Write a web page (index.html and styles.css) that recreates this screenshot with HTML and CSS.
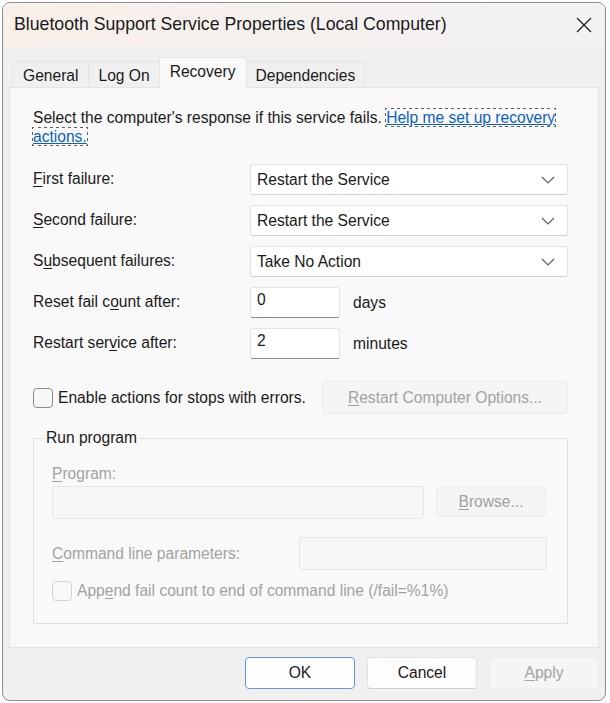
FILE: index.html
```html
<!DOCTYPE html>
<html lang="en">
  <head>
    <meta charset="UTF-8" />
    <title>Bluetooth Support Service Properties (Local Computer)</title>
    <link rel="stylesheet" href="styles.css">
  </head>
  <body>
    <div class="window">
      <div class="titlebar">
        <span class="title">Bluetooth Support Service Properties (Local Computer)</span>
        <button class="close-btn" aria-label="Close">
          <svg width="16" height="16" viewBox="0 0 16 16">
            <path d="M1 1 L15 15 M15 1 L1 15" stroke="#1b1b1b" stroke-width="1.2" fill="none" />
          </svg>
        </button>
      </div>

      <div class="tabs">
        <span class="tab">General</span>
        <span class="tab">Log On</span>
        <span class="tab active">Recovery</span>
        <span class="tab">Dependencies</span>
      </div>

      <div class="panel">
        <p class="intro">
          Select the computer's response if this service fails.
          <a href="#" class="help-link">Help me set up recovery actions.</a>
        </p>

        <div class="form-grid">
          <label><u>F</u>irst failure:</label>
          <div class="select">
            <span>Restart the Service</span>
            <svg width="14" height="8" viewBox="0 0 14 8"><path d="M1 1 L7 7 L13 1" stroke="#5f5f5f" stroke-width="1.2" fill="none" /></svg>
          </div>

          <label><u>S</u>econd failure:</label>
          <div class="select">
            <span>Restart the Service</span>
            <svg width="14" height="8" viewBox="0 0 14 8"><path d="M1 1 L7 7 L13 1" stroke="#5f5f5f" stroke-width="1.2" fill="none" /></svg>
          </div>

          <label>S<u>u</u>bsequent failures:</label>
          <div class="select">
            <span>Take No Action</span>
            <svg width="14" height="8" viewBox="0 0 14 8"><path d="M1 1 L7 7 L13 1" stroke="#5f5f5f" stroke-width="1.2" fill="none" /></svg>
          </div>

          <label>Reset fail c<u>o</u>unt after:</label>
          <div class="number-row">
            <div class="textbox">0</div>
            <span>days</span>
          </div>

          <label>Restart ser<u>v</u>ice after:</label>
          <div class="number-row">
            <div class="textbox">2</div>
            <span>minutes</span>
          </div>
        </div>

        <div class="stops-row">
          <label class="check">
            <span class="checkbox"></span>
            <span>Enable actions for stops with errors.</span>
          </label>
          <button class="btn disabled restart-options"><u>R</u>estart Computer Options...</button>
        </div>

        <fieldset class="run-program">
          <legend>Run program</legend>
          <div class="field-label"><u>P</u>rogram:</div>
          <div class="program-row">
            <div class="textbox disabled program-box"></div>
            <button class="btn disabled browse-btn"><u>B</u>rowse...</button>
          </div>
          <div class="cmd-row">
            <span class="field-label"><u>C</u>ommand line parameters:</span>
            <div class="textbox disabled cmd-box"></div>
          </div>
          <label class="check disabled-text">
            <span class="checkbox disabled"></span>
            <span>App<u>e</u>nd fail count to end of command line (/fail=%1%)</span>
          </label>
        </fieldset>
      </div>

      <div class="footer">
        <button class="btn default">OK</button>
        <button class="btn">Cancel</button>
        <button class="btn disabled"><u>A</u>pply</button>
      </div>
    </div>
  </body>
</html>
```

FILE: styles.css
```css
body {
  margin: 0;
  font-family: "Liberation Sans", Arial, sans-serif;
  font-size: 15.6px;
  color: #1a1a1a;
  background-color: #ffffff;
}

u {
  text-decoration-thickness: 1px;
  text-underline-offset: 2px;
}

/* Window frame */
.window {
  box-sizing: border-box;
  width: 604px;
  height: 699px;
  margin: 2px 0 0 2px;
  border: 1px solid #8d8d8d;
  border-radius: 8px;
  background-color: #f0f0f0;
  overflow: hidden;
  display: flex;
  flex-direction: column;
}

.titlebar {
  height: 44px;
  flex-shrink: 0;
  display: flex;
  align-items: center;
  justify-content: space-between;
  padding: 0 13px 0 11px;
  background: linear-gradient(90deg, #f8efe9 0%, #f5f1ef 50%, #f3f2f2 100%);
}

.title {
  font-size: 17.7px;
  color: #1b1b1b;
  padding-bottom: 2px;
}

.close-btn {
  border: none;
  background: none;
  padding: 0;
  width: 16px;
  height: 16px;
  display: flex;
}

/* Tabs */
.tabs {
  display: flex;
  align-items: flex-end;
  height: 30px;
  margin-top: 10px;
  padding-left: 9px;
}

.tab {
  height: 26px;
  box-sizing: border-box;
  padding: 5px 9px 0;
  border: 1px solid #e4e4e4;
  border-bottom: none;
  margin-right: -1px;
  background-color: #f0f0f0;
  color: #1a1a1a;
}

.tab:first-child {
  padding: 5px 10px 0;
}

.tab.active {
  height: 31px;
  padding: 5px 10px 0;
  background-color: #f9f9f9;
  border-color: #e6e6e6;
  position: relative;
  z-index: 1;
  margin-bottom: -1px;
}

/* Content panel */
.panel {
  box-sizing: border-box;
  height: 561px;
  margin: 0 6px;
  border: 1px solid #e4e4e4;
  background-color: #f9f9f9;
  padding: 20px 28px 0 23px;
}

.intro {
  margin: 0;
  line-height: 19px;
  width: 532px;
}

.help-link {
  color: #0b62c4;
  text-decoration: underline;
  outline: 1px dotted #606060;
  outline-offset: 0;
}

.form-grid {
  display: grid;
  grid-template-columns: 217px 318px;
  grid-auto-rows: 31px;
  row-gap: 10px;
  align-items: center;
  margin-top: 18px;
}

.form-grid label {
  padding-bottom: 1px;
}

.select {
  box-sizing: border-box;
  height: 31px;
  display: flex;
  align-items: center;
  justify-content: space-between;
  padding: 0 12px 0 6px;
  background-color: #ffffff;
  border: 1px solid #e2e2e2;
  border-bottom-color: #d2d2d2;
  border-radius: 3px;
}

.number-row {
  display: flex;
  align-items: center;
  gap: 13px;
}

.textbox {
  box-sizing: border-box;
  width: 90px;
  height: 31px;
  padding: 3px 6px 0;
  background-color: #ffffff;
  border: 1px solid #e5e5e5;
  border-bottom: 1px solid #8a8a8a;
  border-radius: 3px;
}

.textbox.disabled {
  background-color: #f7f7f7;
  border: 1px solid #e6e6e6;
}

/* Checkboxes */
.check {
  display: flex;
  align-items: center;
  gap: 5px;
}

.checkbox {
  box-sizing: border-box;
  width: 20px;
  height: 20px;
  flex-shrink: 0;
  border: 1px solid #8a8a8a;
  border-radius: 4px;
  background-color: #f7f7f7;
  margin-top: 1px;
}

.checkbox.disabled {
  border-color: #d3d3d3;
  background-color: #f9f9f9;
}

.stops-row {
  display: flex;
  align-items: center;
  justify-content: space-between;
  margin-top: 22px;
  width: 535px;
}

/* Buttons */
.btn {
  box-sizing: border-box;
  height: 32px;
  font-family: inherit;
  font-size: 15.6px;
  color: #1a1a1a;
  background-color: #fdfdfd;
  border: 1px solid #e2e2e2;
  border-bottom-color: #cccccc;
  border-radius: 4px;
  padding: 0;
}

.btn.disabled {
  color: #a2a2a2;
  background-color: #f5f5f5;
  border-color: #ececec;
}

.btn.default {
  border: 1px solid #5d9be0;
}

.restart-options {
  width: 246px;
  height: 33px;
}

/* Run program group */
.run-program {
  box-sizing: border-box;
  width: 535px;
  height: 195px;
  margin: 15px 0 0;
  padding: 18px 20px 0 18px;
  border: 1px solid #e0e0e0;
  border-radius: 1px;
}

.run-program legend {
  padding: 0 2px;
  margin-left: -8px;
  color: #1a1a1a;
}

.field-label,
.disabled-text {
  color: #a2a2a2;
}

.program-row {
  display: flex;
  gap: 12px;
  margin-top: 3px;
}

.program-box {
  width: 372px;
  height: 33px;
}

.browse-btn {
  width: 110px;
  height: 31px;
  background-color: #f7f7f7;
}

.cmd-row {
  display: flex;
  align-items: center;
  justify-content: space-between;
  margin-top: 18px;
  width: 495px;
}

.cmd-box {
  width: 248px;
  height: 33px;
}

.run-program .check {
  margin-top: 10px;
}

/* Footer buttons */
.footer {
  display: flex;
  justify-content: flex-end;
  gap: 12px;
  padding: 9px 6px 0 0;
}

.footer .btn {
  width: 110px;
}
```
